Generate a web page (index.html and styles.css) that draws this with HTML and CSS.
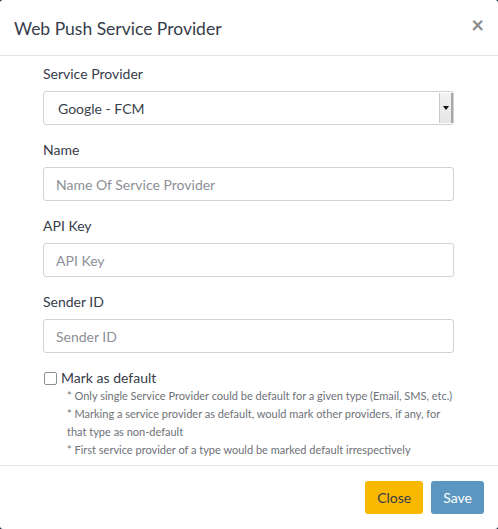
FILE: index.html
```html
<!DOCTYPE html>
<html>
<head>
<meta charset="utf-8">
<link rel="stylesheet" href="styles.css">
</head>
<body>
<div class="modal">
  <div class="modal-header">
    <h4 class="modal-title">Web Push Service Provider</h4>
    <span class="close">&times;</span>
  </div>
  <div class="modal-body">
    <div class="form-group">
      <label class="label">Service Provider</label>
      <div class="select-wrap">
        <select class="control select"><option>Google - FCM</option></select>
        <span class="select-btn"><svg width="6" height="4" viewBox="0 0 6 4"><path d="M0 0H6L3 4Z" fill="#111"/></svg></span>
      </div>
    </div>
    <div class="form-group">
      <label class="label">Name</label>
      <input class="control" type="text" placeholder="Name Of Service Provider">
    </div>
    <div class="form-group">
      <label class="label">API Key</label>
      <input class="control" type="text" placeholder="API Key">
    </div>
    <div class="form-group">
      <label class="label">Sender ID</label>
      <input class="control" type="text" placeholder="Sender ID">
    </div>
    <div class="check-row">
      <span class="checkbox"></span>
      <span class="check-label">Mark as default</span>
    </div>
    <div class="help">
      <div>* Only single Service Provider could be default for a given type (Email, SMS, etc.)</div>
      <div>* Marking a service provider as default, would mark other providers, if any, for that type as non-default</div>
      <div>* First service provider of a type would be marked default irrespectively</div>
    </div>
  </div>
  <div class="modal-footer">
    <button class="btn btn-close">Close</button>
    <button class="btn btn-save">Save</button>
  </div>
</div>
</body>
</html>
```
FILE: styles.css
```css
* { box-sizing: border-box; }
html, body { margin: 0; padding: 0; }
body {
  background: #0f2a3a;
  font-family: Lato, sans-serif;
  color: #363c4a;
  width: 498px;
  height: 529px;
  overflow: hidden;
}
.modal {
  background: #fff;
  width: 498px;
  height: 529px;
  border-radius: 3px;
  display: flex;
  flex-direction: column;
}
.modal-header {
  flex-shrink: 0;
  height: 56px;
  border-bottom: 1px solid #e5e5e5;
  display: flex;
  align-items: center;
  justify-content: space-between;
  padding: 0 14px 0 14px;
}
.modal-title {
  margin: 0;
  font-size: 17.5px;
  font-weight: 400;
  color: #363c4a;
  padding-top: 1px;
}
.close {
  font-size: 22px;
  font-weight: 700;
  color: #8a8a8a;
  line-height: 1;
  margin-top: -6px;
}
.modal-body {
  padding: 8px 44px 0 43px;
  flex: 1;
  min-height: 0;
  border-bottom: 1px solid #e8e8e8;
}
.form-group { margin-bottom: 15px; }
.label {
  display: block;
  font-size: 14px;
  line-height: 20px;
  margin-bottom: 7px;
  color: #363c4a;
}
.control {
  display: block;
  width: 100%;
  height: 34px;
  border: 1px solid #cfd3d8;
  border-radius: 3px;
  padding: 0 12px;
  font-family: Lato, sans-serif;
  font-size: 14px;
  color: #3a3f4a;
  background: #fff;
  outline: none;
}
.control::placeholder { color: #8d9097; }
.select-wrap { position: relative; }
.select {
  -webkit-appearance: none;
  appearance: none;
  padding-left: 14px;
}
.select-btn {
  position: absolute;
  right: 1px;
  top: 2px;
  width: 14px;
  height: 30px;
  background: linear-gradient(#f2f2f2, #e6e6e6);
  border-left: 1px solid #c9c9c9;
  border-right: 2px solid #a9a9a9;
  display: flex;
  align-items: center;
  justify-content: center;
}
.check-row {
  display: flex;
  align-items: center;
  margin-top: 4px;
}
.checkbox {
  width: 13px;
  height: 13px;
  border: 1px solid #8b8f96;
  border-radius: 2px;
  margin: 0 4px 0 1px;
}
.check-label {
  font-size: 14px;
  line-height: 20px;
}
.help {
  padding-left: 24px;
  font-size: 11px;
  line-height: 18px;
  color: #6e7178;
  margin-top: -1px;
}
.modal-footer {
  flex-shrink: 0;
  padding: 15px 14px 15px 15px;
  display: flex;
  justify-content: flex-end;
  gap: 8px;
}
.btn {
  height: 33px;
  border: none;
  border-radius: 3px;
  font-family: Lato, sans-serif;
  font-size: 14px;
  padding: 0 12px;
}
.btn-close { background: #fbb800; color: #363c4a; }
.btn-save { background: #5a96c0; color: #fff; }
```
